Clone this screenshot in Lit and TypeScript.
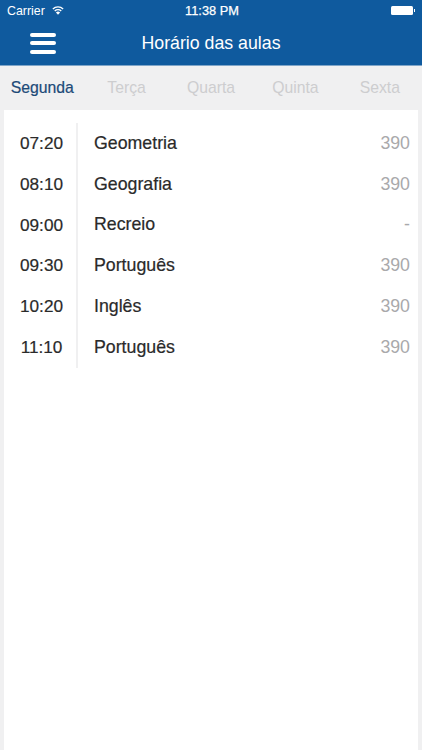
import { LitElement, html, css, svg } from "lit";
import { customElement } from "lit/decorators.js";

const DAYS = ["Segunda", "Terça", "Quarta", "Quinta", "Sexta"];
const ROWS = [
  ["07:20", "Geometria", "390"],
  ["08:10", "Geografia", "390"],
  ["09:00", "Recreio", "-"],
  ["09:30", "Português", "390"],
  ["10:20", "Inglês", "390"],
  ["11:10", "Português", "390"],
];

const wifi = svg`<svg class="wifi" viewBox="0 0 14 10" width="12" height="9" aria-hidden="true">
  <path d="M7 10 L4.6 7.4 A3.4 3.4 0 0 1 9.4 7.4 Z" fill="#fff"/>
  <path d="M3.2 5.6 A5.6 5.6 0 0 1 10.8 5.6" fill="none" stroke="#fff" stroke-width="1.6"/>
  <path d="M1 3.2 A8.6 8.6 0 0 1 13 3.2" fill="none" stroke="#fff" stroke-width="1.6"/>
</svg>`;

@customElement("app-root")
export class AppRoot extends LitElement {
  static styles = css`
    :host {
      display: flex;
      flex-direction: column;
      width: 422px;
      height: 750px;
      background: #f0f0f1;
      font-family: "Liberation Sans", Arial, sans-serif;
      overflow: hidden;
    }
    .head {
      background: #0f5a9e;
      color: #fff;
      height: 65px;
      flex: none;
      border-bottom: 1px solid #7fa5c8;
      box-sizing: content-box;
    }
    .status {
      display: grid;
      grid-template-columns: 1fr auto 1fr;
      align-items: center;
      height: 21px;
      font-size: 12.4px;
      padding: 0 7px;
    }
    .carrier { display: flex; align-items: center; gap: 7px; }
    .wifi { margin-top: 0; }
    .time { font-weight: 400; font-size: 12.8px; -webkit-text-stroke: 0.25px #fff; margin-left: 2px; }
    .battery { justify-self: end; display: flex; align-items: center; }
    .battery i { display: block; width: 22px; height: 9px; background: #fff; border-radius: 1.5px; }
    .battery b { display: block; width: 1.5px; height: 3px; background: #fff; margin-left: 1px; }
    .nav {
      display: grid;
      grid-template-columns: 1fr auto 1fr;
      align-items: center;
      height: 44px;
    }
    .burger {
      display: flex;
      flex-direction: column;
      gap: 4.5px;
      margin-left: 30px;
      width: 26px;
    }
    .burger span { display: block; height: 4px; border-radius: 2px; background: #fff; }
    .title { font-size: 17.75px; }
    .tabs {
      display: flex;
      height: 44px;
      flex: none;
      align-items: center;
    }
    .tab {
      flex: 1;
      text-align: center;
      font-size: 15.75px;
      color: #cdcdcf;
    }
    .tab.on { color: #1c4a78; -webkit-text-stroke: 0.2px #1c4a78; }
    .card {
      flex: 1;
      background: #fff;
      margin: 0 4px;
      padding-top: 13px;
    }
    .list { display: flex; flex-direction: column; }
    .row {
      display: grid;
      grid-template-columns: 72px 1fr auto;
      align-items: center;
      height: 40.8px;
      font-size: 17.75px;
      color: #2a2a2a;
    }
    .t {
      text-align: center;
      height: 100%;
      line-height: 40.8px;
      border-right: 2px solid #f0f0f1;
      padding-left: 3px;
      box-sizing: border-box;
      width: 74px;
      font-size: 17.2px;
      -webkit-text-stroke: 0.2px #2a2a2a;
    }
    .s { padding-left: 18px; -webkit-text-stroke: 0.2px #2a2a2a; }
    .r { color: #a9a9ab; padding-right: 8px; }
  `;

  render() {
    return html`
      <header class="head">
        <div class="status">
          <div class="carrier"><span>Carrier</span>${wifi}</div>
          <div class="time">11:38 PM</div>
          <div class="battery"><i></i><b></b></div>
        </div>
        <div class="nav">
          <div class="burger"><span></span><span></span><span></span></div>
          <div class="title">Horário das aulas</div>
          <div></div>
        </div>
      </header>
      <nav class="tabs">
        ${DAYS.map((d, i) => html`<div class="tab ${i === 0 ? "on" : ""}">${d}</div>`)}
      </nav>
      <main class="card">
        <div class="list">
          ${ROWS.map(
            ([t, s, r]) => html`<div class="row"><div class="t">${t}</div><div class="s">${s}</div><div class="r">${r}</div></div>`
          )}
        </div>
      </main>
    `;
  }
}
